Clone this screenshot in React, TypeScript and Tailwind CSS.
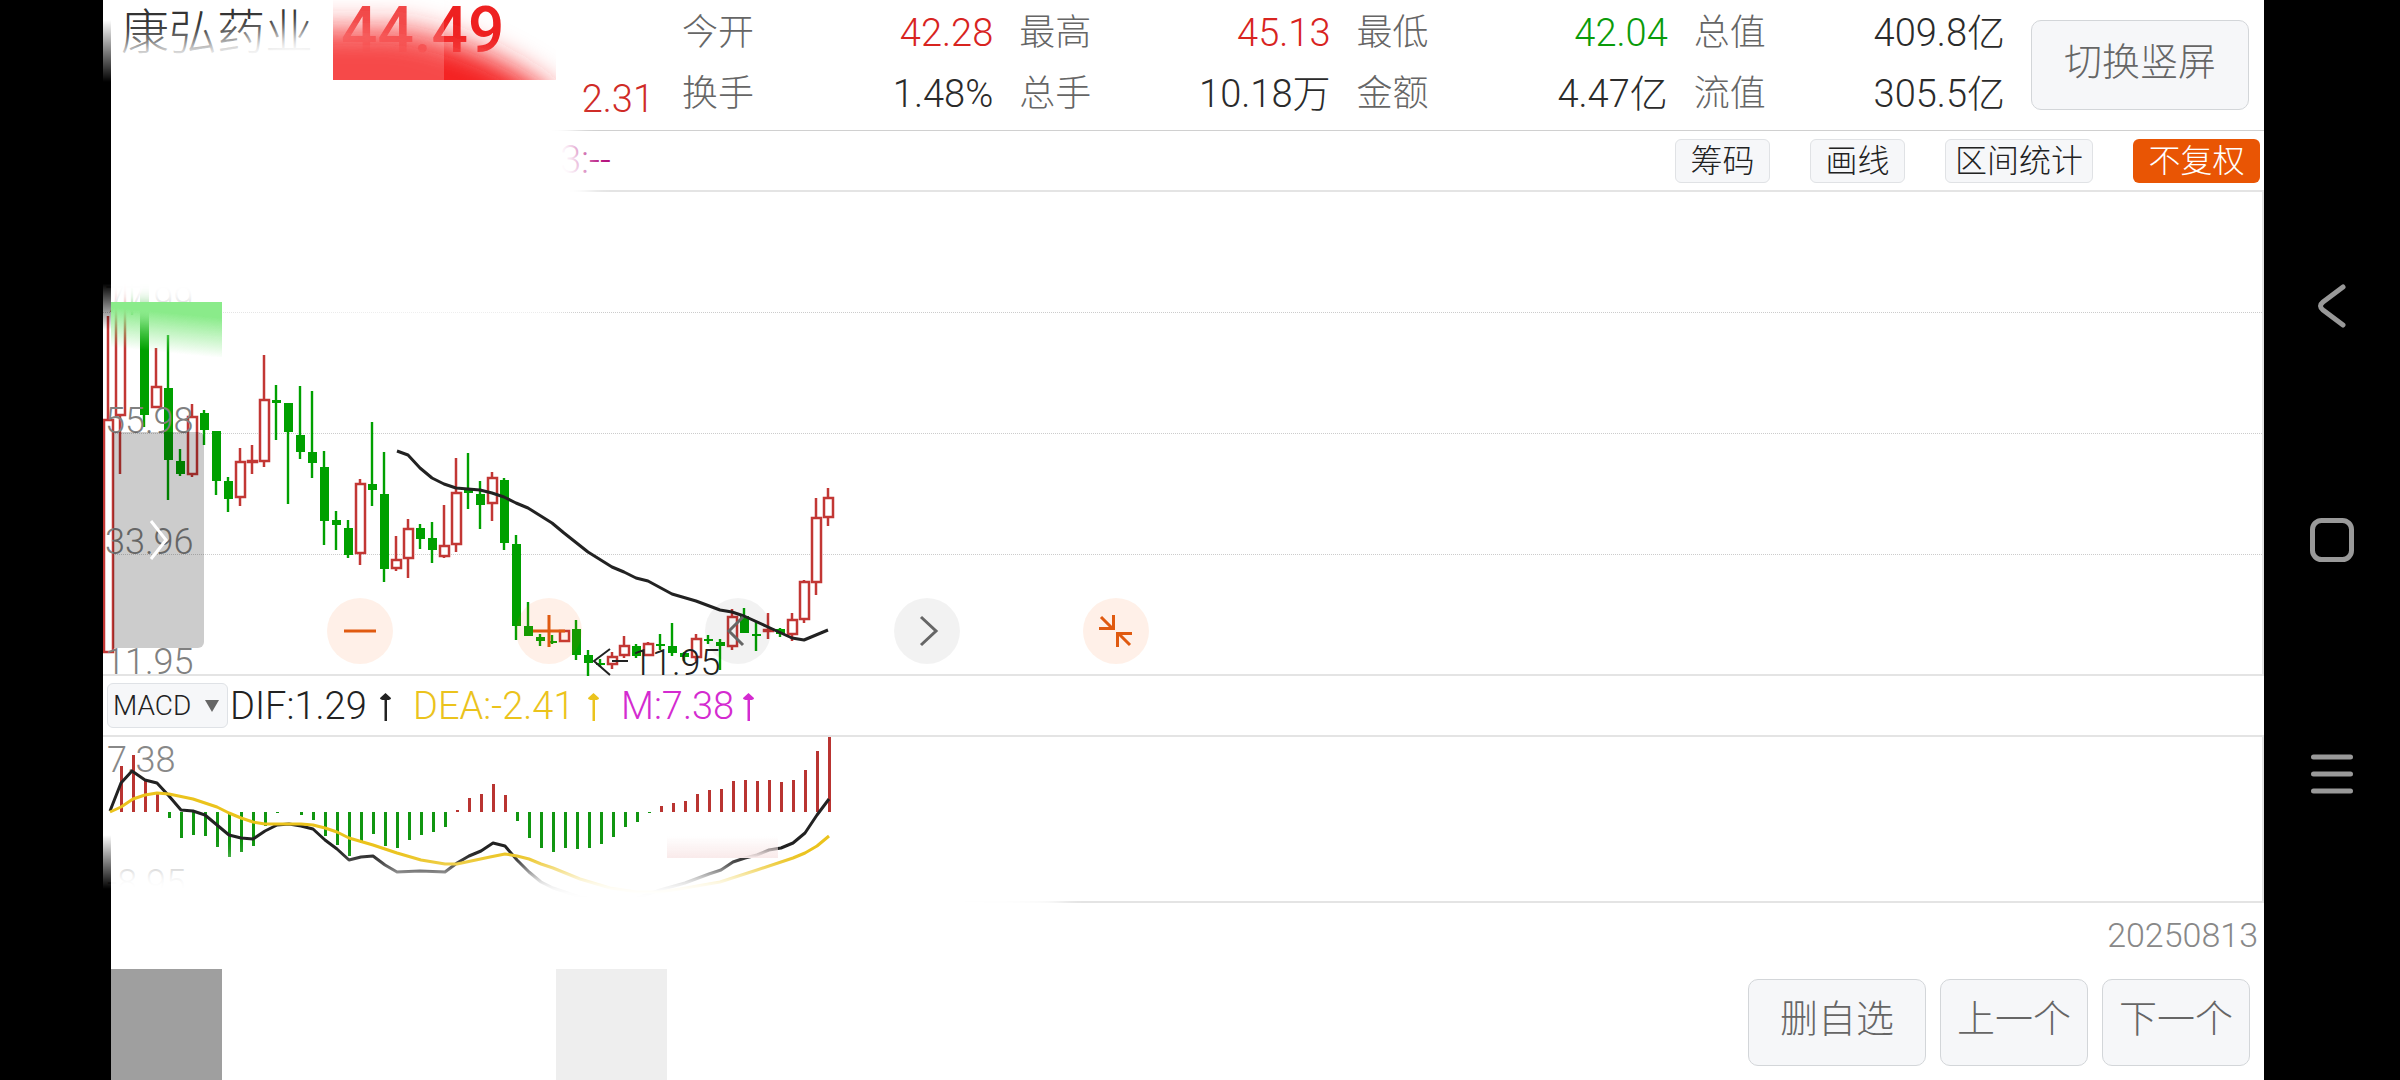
import React from "react";

type Candle = [up: 0 | 1, high: number, top: number, bottom: number, low: number];

const FIRST_X = 108;
const STEP = 12;

const candles: Candle[] = [
  [1, 124, 227, 461, 461], [1, 60, 70, 224, 282], [0, 80, 80, 84, 123], [0, 70, 74, 223, 235],
  [1, 156, 194, 216, 216], [0, 143, 196, 268, 308], [0, 257, 269, 282, 284], [1, 212, 224, 283, 285],
  [0, 218, 221, 238, 253], [0, 239, 239, 289, 303], [0, 285, 289, 307, 320], [1, 256, 269, 306, 314],
  [1, 253, 268, 271, 282], [1, 163, 207, 270, 275], [0, 193, 208, 211, 248], [0, 211, 211, 240, 312],
  [0, 194, 243, 260, 267], [0, 199, 260, 271, 286], [0, 259, 275, 329, 353], [0, 319, 328, 333, 358],
  [0, 328, 336, 363, 366], [1, 287, 291, 362, 373], [0, 230, 292, 298, 314], [0, 260, 302, 377, 390],
  [1, 344, 367, 377, 379], [1, 327, 336, 367, 386], [0, 332, 336, 347, 357], [0, 330, 346, 358, 371],
  [1, 313, 353, 365, 366], [1, 266, 300, 353, 360], [0, 261, 297, 301, 317], [0, 289, 302, 313, 337],
  [1, 280, 285, 312, 329], [0, 286, 288, 351, 358], [0, 343, 352, 434, 448], [0, 410, 434, 444, 444],
  [0, 442, 445, 449, 454], [0, 443, 449, 451, 452], [1, 438, 438, 450, 450], [0, 428, 437, 463, 468],
  [0, 458, 463, 471, 484], [0, 467, 471, 473, 475], [1, 460, 464, 473, 477], [1, 444, 453, 464, 466],
  [0, 452, 454, 464, 466], [1, 450, 451, 464, 464], [0, 442, 452, 454, 458], [0, 431, 454, 461, 464],
  [0, 460, 461, 465, 469], [1, 442, 446, 466, 469], [0, 443, 447, 449, 452], [0, 447, 450, 454, 478],
  [1, 417, 424, 455, 458], [0, 416, 424, 441, 441], [0, 429, 442, 444, 459], [1, 421, 437, 440, 447],
  [0, 436, 437, 442, 445], [1, 421, 427, 443, 449], [1, 388, 389, 428, 431], [1, 306, 325, 391, 403],
  [1, 296, 305, 326, 334],
];

const averageLine =
  "397,259 408,263 420,276 432,286 444,292 456,296 480,298 492,301 504,305 516,311 528,316 552,331 564,341 588,360 612,375 624,380 636,386 648,389 672,402 696,409 720,418 732,420 744,424 768,435 792,446 804,448 816,443 828,438";

const ZERO = 75;
const bars: number[] = [
  75, 29, 18, 43, 56, 81, 101, 98, 99, 110, 120, 115, 109, 89, 76, 75, 78, 83, 99, 108, 119, 106, 97, 109, 111,
  103, 98, 95, 90, 73, 61, 57, 47, 58, 84, 101, 111, 115, 111, 112, 111, 107, 100, 90, 85, 76, 69, 66, 64, 57,
  53, 52, 44, 43, 44, 43, 45, 43, 33, 14, 0,
];

const difLine =
  "110,74 121,46 132,34 145,43 157,46 169,59 181,73 193,74 205,78 217,88 229,98 241,101 253,102 265,94 277,88 289,87 301,89 313,92 325,103 337,112 349,123 361,120 373,119 385,128 397,135 420,134 445,135 457,126 469,119 481,114 493,106 505,109 517,123 529,135 541,145 553,151 580,160 610,164 637,161 660,153 685,146 709,137 721,133 733,125 745,121 757,118 769,113 781,111 793,106 805,96 817,78 829,62";

const deaLine =
  "110,75 121,70 133,62 145,58 157,56 169,57 193,62 205,66 217,70 229,76 241,81 253,85 265,87 301,87 313,88 325,91 337,95 349,101 373,108 397,116 421,123 445,127 457,127 490,120 505,117 517,119 529,122 541,127 553,131 580,142 610,151 637,155 660,155 680,152 720,145 757,133 793,121 805,116 817,109 829,99";

const stats = [
  { label: "今开", value: "42.28", tone: "text-[#d8241f]" },
  { label: "最高", value: "45.13", tone: "text-[#d8241f]" },
  { label: "最低", value: "42.04", tone: "text-[#0a9b0a]" },
  { label: "总值", value: "409.8亿", tone: "text-[#2b2b2b]" },
  { label: "换手", value: "1.48%", tone: "text-[#2b2b2b]" },
  { label: "总手", value: "10.18万", tone: "text-[#2b2b2b]" },
  { label: "金额", value: "4.47亿", tone: "text-[#2b2b2b]" },
  { label: "流值", value: "305.5亿", tone: "text-[#2b2b2b]" },
];

function Header() {
  return (
    <header className="flex border-b border-[#d0d0d0]">
      <div className="flex w-[579px] shrink-0 pl-[18px]">
        <h1 className="text-[48px] leading-[66px] text-[#333]">康弘药业</h1>
        <strong className="ml-[28px] text-[64px] font-medium leading-[62px] text-[#ee2222]">44.49</strong>
        <span className="ml-auto mr-[28px] self-end text-[38px] leading-[61px] text-[#cf2b27]">2.31</span>
      </div>
      <dl className="grid flex-1 grid-cols-4 gap-x-[26px] pb-[5px] pt-[3px] text-[38px] leading-[61px]">
        {stats.map((s) => (
          <div key={s.label} className="flex justify-between">
            <dt className="text-[36px] text-[#666]">{s.label}</dt>
            <dd className={s.tone}>{s.value}</dd>
          </div>
        ))}
      </dl>
      <button className="ml-[26px] mr-[15px] mt-[20px] h-[90px] w-[218px] shrink-0 rounded-[10px] border border-[#d3d6d9] bg-[#f6f7f9] pb-[6px] text-[38px] text-[#666]">
        切换竖屏
      </button>
    </header>
  );
}

function Toolbar() {
  return (
    <div className="flex h-[61px] items-center gap-[40px] border-b-2 border-[#e4e4e4] pl-[457px] pr-[4px] text-[32px]">
      <span className="mr-auto text-[38px] text-[#b5107c]">3:--</span>
      <button className="h-[44px] w-[95px] rounded-[6px] border border-[#e0e2e5] bg-[#f6f7f9] leading-[40px] text-[#222]">筹码</button>
      <button className="h-[44px] w-[95px] rounded-[6px] border border-[#e0e2e5] bg-[#f6f7f9] leading-[40px] text-[#222]">画线</button>
      <button className="h-[44px] w-[148px] rounded-[6px] border border-[#e0e2e5] bg-[#f6f7f9] leading-[40px] text-[#222]">区间统计</button>
      <button className="h-[44px] w-[127px] rounded-[6px] bg-[#e95504] leading-[42px] text-white">不复权</button>
    </div>
  );
}

function CandleShape({ index, data }: { index: number; data: Candle }) {
  const [up, high, top, bottom, low] = data;
  const x = FIRST_X + STEP * index;
  if (up) {
    return (
      <g stroke="#c23734" strokeWidth="2.5" fill="#fff">
        <path d={`M${x} ${high}V${low}`} />
        <rect x={x - 4} y={top + 1} width="9" height={Math.max(bottom - top - 2, 1)} />
      </g>
    );
  }
  return (
    <g fill="#00a000">
      <rect x={x - 1.2} y={high} width="2.4" height={low - high} />
      <rect x={x - 4} y={top} width="9" height={Math.max(bottom - top, 2)} />
    </g>
  );
}

function RoundButton({ label, warm, children }: { label: string; warm?: boolean; children: React.ReactNode }) {
  return (
    <button
      aria-label={label}
      className={`flex size-[66px] items-center justify-center rounded-full ${
        warm ? "bg-[#ff5a00]/9 text-[#e05a10]" : "bg-black/5 text-[#666]"
      }`}
    >
      <svg width="36" height="36" viewBox="0 0 36 36" fill="none" stroke="currentColor" strokeWidth="3">
        {children}
      </svg>
    </button>
  );
}

function PriceChart() {
  return (
    <section className="relative border-r-2 border-[#e4e4e4]">
      {["77.99", "55.98", "33.96", "11.95"].map((v, i) => (
        <div
          key={v}
          className={`flex h-[121px] items-end pl-[2px] ${
            i < 3 ? "border-b border-dotted border-[#ccc]" : "border-b-2 border-[#e4e4e4]"
          }`}
        >
          <span className="relative z-10 text-[36px] leading-[24px] text-[#808080]">{v}</span>
        </div>
      ))}
      <svg className="absolute left-0 top-0" width="740" height="484" viewBox="103 0 740 484">
        {candles.map((c, i) => (
          <CandleShape key={i} index={i} data={c} />
        ))}
        <polyline points={averageLine} fill="none" stroke="#222" strokeWidth="3" strokeLinejoin="round" />
        <path d="M610 457L594 469L610 483M612 469H628" fill="none" stroke="#222" strokeWidth="2" />
      </svg>
      <span className="absolute bottom-0 left-[529px] text-[36px] leading-[26px] text-[#222]">11.95</span>
      <button
        aria-label="展开"
        className="absolute left-[10px] top-[240px] z-10 flex h-[216px] w-[91px] items-center justify-center rounded-r-[6px] bg-black/20"
      >
        <svg width="20" height="42" viewBox="0 0 20 42" fill="none" stroke="#fff" strokeWidth="3">
          <path d="M2 2L17 21L2 40" />
        </svg>
      </button>
      <div className="absolute left-[224px] top-[406px] flex gap-[123px]">
        <RoundButton label="缩小" warm>
          <path d="M2 18H34" />
        </RoundButton>
        <RoundButton label="放大" warm>
          <path d="M2 18H34M18 2V34" />
        </RoundButton>
        <RoundButton label="左移">
          <path d="M23 4L9 18L23 32" />
        </RoundButton>
        <RoundButton label="右移">
          <path d="M12 4L27 18L12 32" />
        </RoundButton>
        <RoundButton label="退出全屏" warm>
          <path d="M3 4L15 16M1 15.5H15.5V2M32 32L20 20M34 20.5H19.500V34" />
        </RoundButton>
      </div>
    </section>
  );
}

function UpArrow() {
  return (
    <svg width="11" height="28" viewBox="0 0 11 28" fill="currentColor">
      <path d="M5.500 0L11 5Q11 7 7 7V28H4.500V7Q0 7 0 5Z" />
    </svg>
  );
}

function MacdBar() {
  return (
    <div className="flex h-[61px] items-center border-b-2 border-[#e4e4e4] pl-[4px] text-[38px]">
      <div className="relative mr-[2px]">
        <select
          aria-label="指标"
          className="block h-[45px] w-[121px] appearance-none rounded-[6px] border border-[#dfe2e6] bg-[#f6f7f9] pl-[5px] text-[28px] font-light leading-[42px] text-[#222]"
        >
          <option>MACD</option>
        </select>
        <svg className="pointer-events-none absolute right-[9px] top-[17px]" width="14" height="12" viewBox="0 0 14 12">
          <path d="M0 0H14L7 12Z" fill="#666" />
        </svg>
      </div>
      <div className="flex items-center gap-[22px] pt-[2px]">
        <span className="flex w-[161px] items-center justify-between text-[#222]">DIF:1.29<UpArrow /></span>
        <span className="flex w-[186px] items-center justify-between text-[#ebc31c]">DEA:-2.41<UpArrow /></span>
        <span className="flex w-[133px] items-center justify-between text-[#d42bd0]">M:7.38<UpArrow /></span>
      </div>
    </div>
  );
}

function MacdChart() {
  return (
    <section className="relative flex h-[166px] flex-col justify-between border-b-2 border-r-2 border-[#e4e4e4] pb-[4px] pl-[4px] pt-[9px] text-[36px] leading-[28px] text-[#888]">
      <span>7.38</span>
      <span>-8.95</span>
      <svg className="absolute left-0 top-0" width="740" height="166" viewBox="103 0 740 166">
        {bars.map((y, i) => (
          <rect
            key={i}
            x={FIRST_X + STEP * i}
            y={Math.min(y, ZERO)}
            width="3"
            height={Math.abs(y - ZERO)}
            fill={y < ZERO ? "#b93431" : "#109610"}
          />
        ))}
        <polyline points={difLine} fill="none" stroke="#222" strokeWidth="3" strokeLinejoin="round" />
        <polyline points={deaLine} fill="none" stroke="#ebc31c" strokeWidth="3" strokeLinejoin="round" />
      </svg>
    </section>
  );
}

function Haze() {
  return (
    <svg className="pointer-events-none absolute left-0 top-0 z-20" width="1140" height="1080" viewBox="0 0 1140 1080">
      <defs>
        <filter id="soft" x="-20%" y="-20%" width="140%" height="140%">
          <feGaussianBlur stdDeviation="11" />
        </filter>
        <filter id="softer" x="-20%" y="-60%" width="140%" height="220%">
          <feGaussianBlur stdDeviation="15" />
        </filter>
        <clipPath id="page">
          <rect x="111" y="0" width="1029" height="1080" />
        </clipPath>
        <clipPath id="redBox">
          <rect x="333" y="0" width="223" height="80" />
        </clipPath>
        <linearGradient id="edgeTop" x1="0" y1="0" x2="0" y2="1">
          <stop offset="0" stopColor="#000" stopOpacity="0" />
          <stop offset="0.2" stopColor="#000" />
          <stop offset="0.85" stopColor="#000" />
          <stop offset="1" stopColor="#000" stopOpacity="0" />
        </linearGradient>
        <linearGradient id="edgeBottom" x1="0" y1="0" x2="0" y2="1">
          <stop offset="0" stopColor="#000" stopOpacity="0" />
          <stop offset="0.22" stopColor="#000" />
        </linearGradient>
        <linearGradient id="green" x1="0.3" y1="0" x2="0.1" y2="1">
          <stop offset="0.15" stopColor="#8aeb8a" />
          <stop offset="0.85" stopColor="#8aeb8a" stopOpacity="0" />
        </linearGradient>
        <linearGradient id="pink" x1="0" y1="0" x2="0" y2="1">
          <stop offset="0" stopColor="#f9eaea" stopOpacity="0" />
          <stop offset="1" stopColor="#f9eaea" />
        </linearGradient>
      </defs>
      <rect x="103" y="20" width="8" height="310" fill="url(#edgeTop)" />
      <rect x="103" y="835" width="8" height="245" fill="url(#edgeBottom)" />
      <g clipPath="url(#page)" fill="#fff">
        <path d="M60 47L200 42L300 30L540 70L577 130L592 190L560 316L400 318L240 312L60 310Z" filter="url(#soft)" />
        <path d="M60 862L230 864L420 874L540 870L700 870L800 874L1000 884L1064 896L1060 960L60 960Z" filter="url(#soft)" />
      </g>
      <g clipPath="url(#redBox)">
        <path d="M260 28L400 28Q490 44 556 98L556 150H260Z" fill="#f42323" filter="url(#softer)" />
        <rect x="333" y="0" width="111" height="80" fill="#fff" opacity="0.18" />
      </g>
      <path d="M111 302H222V357H111Z" fill="url(#green)" className="mix-blend-multiply" />
      <rect x="667" y="836" width="111" height="22" fill="url(#pink)" className="mix-blend-multiply" />
      <rect x="111" y="969" width="111" height="111" fill="#9f9f9f" />
      <rect x="556" y="969" width="111" height="111" fill="#eeeeee" />
    </svg>
  );
}

function Footer() {
  return (
    <footer className="flex flex-col items-end">
      <time className="pr-[6px] pt-[10px] text-[34px] leading-[44px] text-[#888]">20250813</time>
      <div className="mr-[14px] mt-[22px] flex gap-[14px] text-[38px] text-[#666]">
        <button className="h-[87px] w-[178px] rounded-[10px] border border-[#d3d6d9] bg-[#f6f7f9] pb-[6px]">删自选</button>
        <button className="h-[87px] w-[148px] rounded-[10px] border border-[#d3d6d9] bg-[#f6f7f9] pb-[6px]">上一个</button>
        <button className="h-[87px] w-[148px] rounded-[10px] border border-[#d3d6d9] bg-[#f6f7f9] pb-[6px]">下一个</button>
      </div>
    </footer>
  );
}

function SystemNav() {
  return (
    <nav className="flex w-[136px] shrink-0 flex-col items-center justify-center gap-[186px] bg-black">
      <button aria-label="返回">
        <svg width="48" height="48" viewBox="0 0 48 48" fill="none" stroke="#999" strokeWidth="5" strokeLinecap="round" strokeLinejoin="round">
          <path d="M35 5L15 20Q10 24 15 28L35 43" />
        </svg>
      </button>
      <button aria-label="主页">
        <svg width="48" height="48" viewBox="0 0 48 48" fill="none" stroke="#999" strokeWidth="5">
          <rect x="4.500" y="4.500" width="39" height="39" rx="9" />
        </svg>
      </button>
      <button aria-label="菜单">
        <svg width="48" height="48" viewBox="0 0 48 48" fill="none" stroke="#999" strokeWidth="5" strokeLinecap="round">
          <path d="M5.500 7H42.500M5.500 24H42.500M5.500 41H42.500" />
        </svg>
      </button>
    </nav>
  );
}

export default function App() {
  return (
    <div className="relative flex min-h-screen bg-black pl-[103px] font-['Roboto','Noto_Sans_CJK_SC',sans-serif] font-light">
      <main className="flex min-w-0 flex-1 flex-col bg-white">
        <Header />
        <Toolbar />
        <PriceChart />
        <MacdBar />
        <MacdChart />
        <Footer />
      </main>
      <SystemNav />
      <Haze />
    </div>
  );
}
